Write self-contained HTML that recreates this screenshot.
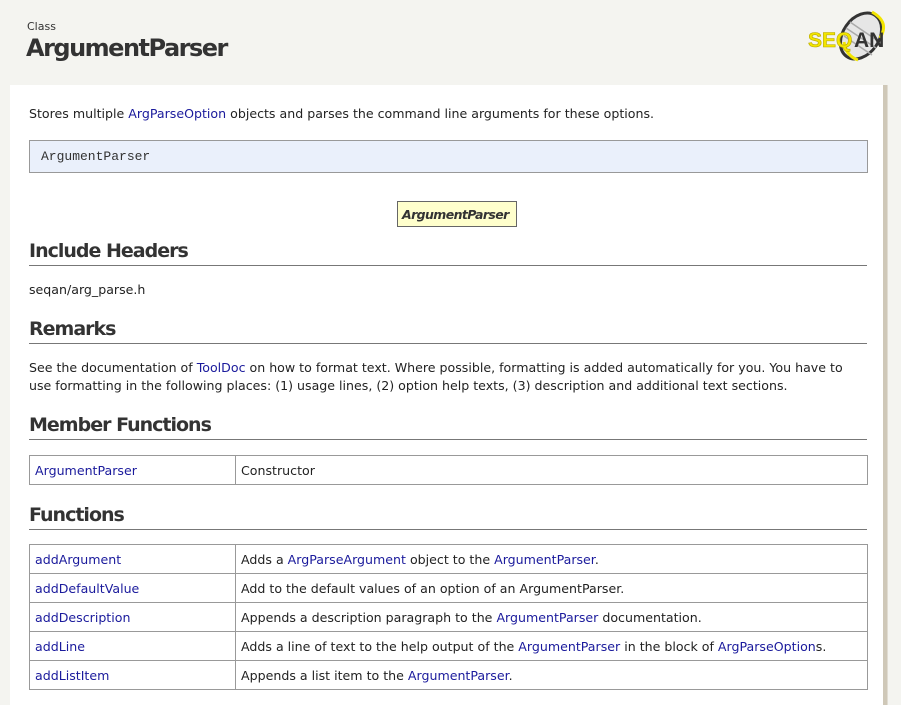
<!DOCTYPE html>
<html><head><meta charset="utf-8"><style>
*{margin:0;padding:0;box-sizing:border-box}
body{width:901px;height:679px;overflow:hidden;background:#f4f4f0;font-family:"DejaVu Sans","Liberation Sans",sans-serif;color:#222;position:relative}
.a{position:absolute;white-space:nowrap}
a{color:#1a1a9c;text-decoration:none}
.panel{position:absolute;left:10px;top:85px;width:877px;height:620px;background:#fff;border-right:4px solid #cfc8b8;box-shadow:1px 0 0 #e0dcd2}
.t{font-size:12.6px;color:#222}
h2{position:absolute;left:29px;width:838px;font-size:19px;font-weight:bold;color:#333;border-bottom:1px solid #777;padding-top:1px;padding-bottom:3px;letter-spacing:-1px}
table{position:absolute;left:29px;width:839px;border-collapse:collapse;font-size:12.6px}
td{border:1px solid #999;height:29px;padding:0 5px;vertical-align:middle}
td:first-child{width:206px}
</style></head><body>
<div class="a" style="left:27px;top:20px;font-size:11px;color:#333">Class</div>
<div class="a" style="left:26px;top:34px;font-size:24px;font-weight:bold;color:#333;letter-spacing:-1.5px">ArgumentParser</div>
<svg class="a" style="left:806px;top:8px" width="82" height="54" viewBox="0 0 82 54">
<ellipse cx="55" cy="28" rx="18" ry="25" transform="rotate(35 55 28)" fill="#e6e6e6" stroke="#333" stroke-width="3"/>
<path d="M40 20 L70 40 M44 14 L72 33 M38 28 L66 47" stroke="#aaa" stroke-width="1.5"/>
<path d="M66 4 Q84 14 74 30" stroke="#f2e500" stroke-width="3" fill="none"/>
<path d="M38 34 Q40 48 52 52" stroke="#f2e500" stroke-width="3" fill="none"/>
<text x="2" y="39" font-family="Liberation Sans,sans-serif" font-weight="bold" font-size="21" fill="#f2e500" stroke="#b8a800" stroke-width=".6">SEQ</text>
<text x="48" y="39" font-family="Liberation Sans,sans-serif" font-weight="bold" font-size="21" fill="#333">AN</text>
</svg>
<div class="panel"></div>
<div class="a t" style="left:29px;top:106px">Stores multiple <a>ArgParseOption</a> objects and parses the command line arguments for these options.</div>
<div class="a" style="left:29px;top:140px;width:839px;height:33px;background:#eaf0fb;border:1px solid #999;font-family:'Liberation Mono',monospace;font-size:13px;padding:8px 11px;color:#333">ArgumentParser</div>
<div class="a" style="left:397px;top:201px;width:120px;height:26px;background:#ffffcc;border:1px solid #666;font-style:italic;font-weight:bold;font-size:12.5px;letter-spacing:-0.6px;padding:5px 0 0 4px;color:#333">ArgumentParser</div>
<h2 style="top:239px">Include Headers</h2>
<div class="a t" style="left:29px;top:282px">seqan/arg_parse.h</div>
<h2 style="top:317px">Remarks</h2>
<div class="a t" style="left:29px;top:359px;line-height:18px">See the documentation of <a>ToolDoc</a> on how to format text. Where possible, formatting is added automatically for you. You have to<br>use formatting in the following places: (1) usage lines, (2) option help texts, (3) description and additional text sections.</div>
<h2 style="top:413px">Member Functions</h2>
<table style="top:455px"><tr><td><a>ArgumentParser</a></td><td>Constructor</td></tr></table>
<h2 style="top:503px">Functions</h2>
<table style="top:544px">
<tr><td><a>addArgument</a></td><td>Adds a <a>ArgParseArgument</a> object to the <a>ArgumentParser</a>.</td></tr>
<tr><td><a>addDefaultValue</a></td><td>Add to the default values of an option of an ArgumentParser.</td></tr>
<tr><td><a>addDescription</a></td><td>Appends a description paragraph to the <a>ArgumentParser</a> documentation.</td></tr>
<tr><td><a>addLine</a></td><td>Adds a line of text to the help output of the <a>ArgumentParser</a> in the block of <a>ArgParseOption</a>s.</td></tr>
<tr><td><a>addListItem</a></td><td>Appends a list item to the <a>ArgumentParser</a>.</td></tr>
</table>
</body></html>
